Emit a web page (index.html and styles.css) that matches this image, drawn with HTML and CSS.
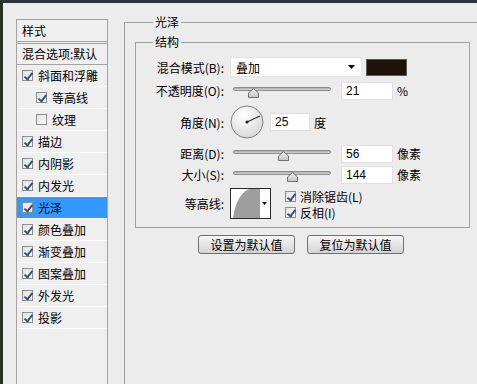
FILE: index.html
```html
<!DOCTYPE html>
<html lang="zh-CN">
<head>
    <meta charset="UTF-8">
    <title>图层样式</title>
    <link rel="stylesheet" href="styles.css">
</head>
<body>
<div class="window">
  <aside class="styles-list">
    <div class="list-head">样式</div>
    <div class="list-head blend">混合选项:默认</div>
    <ul class="effects">
      <li class="effect"><span class="check on"></span>斜面和浮雕</li>
      <li class="effect sub"><span class="check on"></span>等高线</li>
      <li class="effect sub"><span class="check"></span>纹理</li>
      <li class="effect"><span class="check on"></span>描边</li>
      <li class="effect"><span class="check on"></span>内阴影</li>
      <li class="effect"><span class="check on"></span>内发光</li>
      <li class="effect active"><span class="check on"></span>光泽</li>
      <li class="effect"><span class="check on"></span>颜色叠加</li>
      <li class="effect"><span class="check on"></span>渐变叠加</li>
      <li class="effect"><span class="check on"></span>图案叠加</li>
      <li class="effect"><span class="check on"></span>外发光</li>
      <li class="effect"><span class="check on"></span>投影</li>
    </ul>
  </aside>

  <main class="panel">
    <fieldset class="group outer">
      <legend>光泽</legend>
      <fieldset class="group inner">
        <legend>结构</legend>

        <div class="row row-blend">
          <label class="label">混合模式(B):</label>
          <div class="select">叠加
            <svg class="arrow" width="7" height="4" viewBox="0 0 7 4"><polygon points="0,0 7,0 3.5,4" fill="#000"/></svg>
          </div>
          <span class="swatch"></span>
        </div>

        <div class="row row-opacity">
          <label class="label">不透明度(O):</label>
          <div class="slider">
            <div class="track"></div>
            <svg class="thumb" style="left: 15px" width="11" height="10" viewBox="0 0 11 10"><polygon points="5.5,0.5 10.5,5 10.5,9.5 0.5,9.5 0.5,5" fill="url(#thumbFill)" stroke="#6f6f6f"/></svg>
          </div>
          <div class="field">21</div>
          <span class="unit">%</span>
        </div>

        <div class="row row-angle">
          <label class="label">角度(N):</label>
          <svg class="dial" width="34" height="34" viewBox="0 0 34 34">
            <defs>
              <radialGradient id="dialFill" cx="0.4" cy="0.3" r="0.8">
                <stop offset="0" stop-color="#ffffff"/>
                <stop offset="1" stop-color="#d4d4d4"/>
              </radialGradient>
              <linearGradient id="thumbFill" x1="0" y1="0" x2="0" y2="1">
                <stop offset="0" stop-color="#f0f0f0"/>
                <stop offset="1" stop-color="#c4c4c4"/>
              </linearGradient>
            </defs>
            <circle cx="17" cy="17" r="16" fill="url(#dialFill)" stroke="#7f7f7f"/>
            <line x1="17" y1="17" x2="30" y2="11" stroke="#333" stroke-width="1.2"/>
            <circle cx="17" cy="17" r="1.6" fill="#222"/>
          </svg>
          <div class="field short">25</div>
          <span class="unit">度</span>
        </div>

        <div class="row row-distance">
          <label class="label">距离(D):</label>
          <div class="slider">
            <div class="track"></div>
            <svg class="thumb" style="left: 45px" width="11" height="10" viewBox="0 0 11 10"><polygon points="5.5,0.5 10.5,5 10.5,9.5 0.5,9.5 0.5,5" fill="url(#thumbFill)" stroke="#6f6f6f"/></svg>
          </div>
          <div class="field">56</div>
          <span class="unit">像素</span>
        </div>

        <div class="row row-size">
          <label class="label">大小(S):</label>
          <div class="slider">
            <div class="track"></div>
            <svg class="thumb" style="left: 54px" width="11" height="10" viewBox="0 0 11 10"><polygon points="5.5,0.5 10.5,5 10.5,9.5 0.5,9.5 0.5,5" fill="url(#thumbFill)" stroke="#6f6f6f"/></svg>
          </div>
          <div class="field">144</div>
          <span class="unit">像素</span>
        </div>

        <div class="row row-contour">
          <label class="label">等高线:</label>
          <svg class="contour" width="41" height="31" viewBox="0 0 41 31">
            <rect x="0.5" y="0.5" width="40" height="30" fill="#fff" stroke="#2a2a2a"/>
            <path d="M3,30 C5,16 10,5 19,1 L30,1 L30,30 Z" fill="#9e9e9e"/>
            <polygon points="32,14 37,14 34.5,17" fill="#000"/>
          </svg>
          <div class="options">
            <div class="option"><span class="check on"></span>消除锯齿(L)</div>
            <div class="option"><span class="check on"></span>反相(I)</div>
          </div>
        </div>
      </fieldset>

      <div class="buttons">
        <button class="btn">设置为默认值</button>
        <button class="btn">复位为默认值</button>
      </div>
    </fieldset>
  </main>
</div>
</body>
</html>
```

FILE: styles.css
```css
* {
    margin: 0;
    padding: 0;
    box-sizing: border-box;
    font-family: "Noto Sans CJK SC", "Liberation Sans", sans-serif;
}
body {
    width: 477px;
    height: 384px;
    overflow: hidden;
    background: #2b2f2a;
    font-size: 12px;
    color: #000;
}
.window {
    display: flex;
    width: 477px;
    height: 384px;
    overflow: hidden;
    background: #ececec;
    border-top: 3px solid #2f343a;
    border-left: 3px solid #2a3027;
}

/* style list on the left */
.styles-list {
    width: 92px;
    margin: 16px 0 0 13px;
    border: 1px solid #a3a3a3;
    border-bottom: none;
    background: #efefef;
    flex-shrink: 0;
}
.list-head {
    height: 22px;
    line-height: 21px;
    padding-left: 5px;
    border-bottom: 1px solid #a3a3a3;
}
.list-head.blend {
    height: 22px;
    margin-top: 1px;
    border-top: 1px solid #a3a3a3;
    line-height: 19px;
}
.effects {
    list-style: none;
}
.effect {
    display: flex;
    align-items: center;
    height: 22px;
    padding-left: 5px;
    border-bottom: 1px solid #fbfbfb;
    white-space: nowrap;
}
.effect.sub {
    padding-left: 19px;
}
.effect.active {
    background: #3399ff;
}
.check {
    position: relative;
    display: inline-block;
    width: 11px;
    height: 11px;
    margin-right: 5px;
    border: 1px solid #8c8e90;
    background: linear-gradient(135deg, #e2e2e2, #fafafa);
    flex-shrink: 0;
}
.check.on::after {
    content: "";
    position: absolute;
    left: 3px;
    top: 0;
    width: 3px;
    height: 7px;
    border: solid #3f4f7c;
    border-width: 0 2px 2px 0;
    transform: rotate(38deg);
}

/* settings panel */
.panel {
    flex: 1;
}
.group {
    border: 1px solid #a0a0a0;
}
.group legend {
    line-height: 16px;
    padding: 0 2px;
}
.outer {
    width: 420px;
    height: 420px;
    margin: 11px 0 0 16px;
    padding: 0 0 0 10px;
}
.outer > legend {
    margin-left: 18px;
}
.inner {
    width: 335px;
    margin-top: 4px;
    padding: 0 0 7px 0;
}
.inner > legend {
    margin-left: 17px;
}
.row {
    display: flex;
    align-items: center;
    white-space: nowrap;
}
.label {
    width: 88px;
    margin-right: 6px;
    text-align: right;
}
.row-blend {
    height: 20px;
    margin-top: 7px;
}
.row-opacity {
    height: 19px;
    margin-top: 4px;
}
.row-angle {
    height: 34px;
    margin-top: 5px;
}
.row-distance {
    height: 19px;
    margin-top: 5px;
}
.row-size {
    height: 19px;
    margin-top: 2px;
}
.row-contour {
    height: 32px;
    margin-top: 4px;
    align-items: flex-start;
}
.row-contour .label {
    line-height: 32px;
}

.select {
    display: flex;
    align-items: center;
    justify-content: space-between;
    width: 132px;
    height: 20px;
    padding: 0 6px 0 5px;
    background: #fff;
    border: 1px solid #e2e2e2;
}
.swatch {
    width: 41px;
    height: 17px;
    margin-left: 4px;
    background: #1e1309;
    border: 1px solid #5a5a5a;
}
.slider {
    position: relative;
    width: 98px;
    height: 19px;
    margin-left: 3px;
}
.track {
    height: 4px;
    margin-top: 6px;
    border: 1px solid #8d8d8d;
    border-radius: 2px;
    background: linear-gradient(#a9a9a9, #d6d6d6);
}
.thumb {
    position: absolute;
    top: 7px;
}
.field {
    width: 52px;
    height: 18px;
    margin-left: 10px;
    padding-left: 4px;
    background: #fff;
    border: 1px solid #e0e0e0;
    font-family: "Liberation Sans", sans-serif;
    font-size: 12px;
    line-height: 16px;
}
.field.short {
    width: 40px;
    margin-left: 6px;
}
.unit {
    margin-left: 4px;
}
.contour {
    display: block;
}
.options {
    margin-left: 14px;
}
.option {
    display: flex;
    align-items: center;
    height: 16px;
}
.option .check {
    margin-right: 4px;
}

.buttons {
    display: flex;
    justify-content: center;
    gap: 12px;
    width: 332px;
    margin-top: 7px;
}
.btn {
    width: 97px;
    height: 19px;
    border: 1px solid #6f6f6f;
    border-radius: 3px;
    background: linear-gradient(#f6f6f6, #d4d4d4);
    font-size: 12px;
    line-height: 16px;
    color: #000;
}
```
